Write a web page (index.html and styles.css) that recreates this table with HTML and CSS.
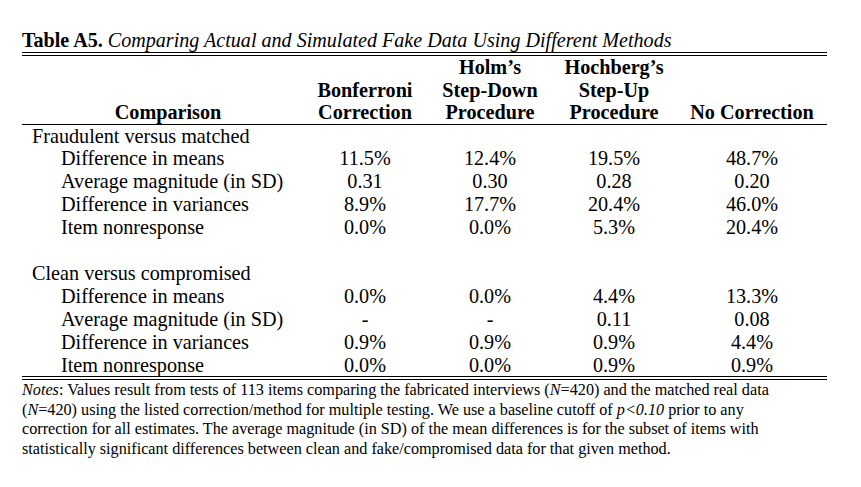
FILE: index.html
```html
<!DOCTYPE html>
<html>
<head>
<meta charset="utf-8">
<link rel="stylesheet" href="styles.css">
</head>
<body>
<div class="page">
  <div class="caption"><b>Table A5.</b> <i>Comparing Actual and Simulated Fake Data Using Different Methods</i></div>
  <div class="rule-double"></div>
  <table class="data">
    <colgroup>
      <col class="c1"><col class="c2"><col class="c3"><col class="c4"><col class="c5">
    </colgroup>
    <thead>
      <tr>
        <th>Comparison</th>
        <th>Bonferroni<br>Correction</th>
        <th>Holm’s<br>Step-Down<br>Procedure</th>
        <th>Hochberg’s<br>Step-Up<br>Procedure</th>
        <th class="last">No Correction</th>
      </tr>
    </thead>
    <tbody>
      <tr><td class="group">Fraudulent versus matched</td><td></td><td></td><td></td><td class="last"></td></tr>
      <tr><td class="item">Difference in means</td><td>11.5%</td><td>12.4%</td><td>19.5%</td><td class="last">48.7%</td></tr>
      <tr><td class="item">Average magnitude (in SD)</td><td>0.31</td><td>0.30</td><td>0.28</td><td class="last">0.20</td></tr>
      <tr><td class="item">Difference in variances</td><td>8.9%</td><td>17.7%</td><td>20.4%</td><td class="last">46.0%</td></tr>
      <tr><td class="item">Item nonresponse</td><td>0.0%</td><td>0.0%</td><td>5.3%</td><td class="last">20.4%</td></tr>
      <tr><td class="item">&nbsp;</td><td></td><td></td><td></td><td class="last"></td></tr>
      <tr><td class="group">Clean versus compromised</td><td></td><td></td><td></td><td class="last"></td></tr>
      <tr><td class="item">Difference in means</td><td>0.0%</td><td>0.0%</td><td>4.4%</td><td class="last">13.3%</td></tr>
      <tr><td class="item">Average magnitude (in SD)</td><td>-</td><td>-</td><td>0.11</td><td class="last">0.08</td></tr>
      <tr><td class="item">Difference in variances</td><td>0.9%</td><td>0.9%</td><td>0.9%</td><td class="last">4.4%</td></tr>
      <tr><td class="item">Item nonresponse</td><td>0.0%</td><td>0.0%</td><td>0.9%</td><td class="last">0.9%</td></tr>
    </tbody>
  </table>
  <div class="rule-double"></div>
  <p class="notes"><i>Notes</i>: Values result from tests of 113 items comparing the fabricated interviews (<i>N</i>=420) and the matched real data<br>(<i>N</i>=420) using the listed correction/method for multiple testing. We use a baseline cutoff of <i>p&lt;0.10</i> prior to any<br>correction for all estimates. The average magnitude (in SD) of the mean differences is for the subset of items with<br>statistically significant differences between clean and fake/compromised data for that given method.</p>
</div>
</body>
</html>
```
FILE: styles.css
```css
html, body {
  margin: 0;
  padding: 0;
  background: #ffffff;
}
body {
  font-family: "Liberation Serif", "Times New Roman", serif;
  color: #000;
}
.page {
  padding: 29px 0 0 22px;
  width: 805px;
}
.caption {
  font-size: 20.1px;
  line-height: 23px;
  white-space: nowrap;
}
.rule-double {
  width: 805px;
  height: 2px;
  border-top: 1px solid #000;
  border-bottom: 1px solid #000;
}
.data {
  width: 805px;
  border-collapse: collapse;
  table-layout: fixed;
  font-size: 20.2px;
  line-height: 23px;
}
.c1 { width: 292px; }
.c2 { width: 102px; }
.c3 { width: 148px; }
.c4 { width: 100px; }
.c5 { width: 163px; }
.data th {
  font-weight: bold;
  vertical-align: bottom;
  text-align: center;
  padding: 0;
  line-height: 22.5px;
  border-bottom: 1px solid #000;
}
.data td {
  padding: 0;
  text-align: center;
  white-space: nowrap;
  line-height: 22.9px;
}
.data .last {
  padding-left: 13px;
}
.data td.group {
  text-align: left;
  padding-left: 10px;
}
.data td.item {
  text-align: left;
  padding-left: 39px;
}
.notes {
  margin: 1px 0 0;
  font-size: 16.2px;
  line-height: 19.4px;
  white-space: nowrap;
}
```
